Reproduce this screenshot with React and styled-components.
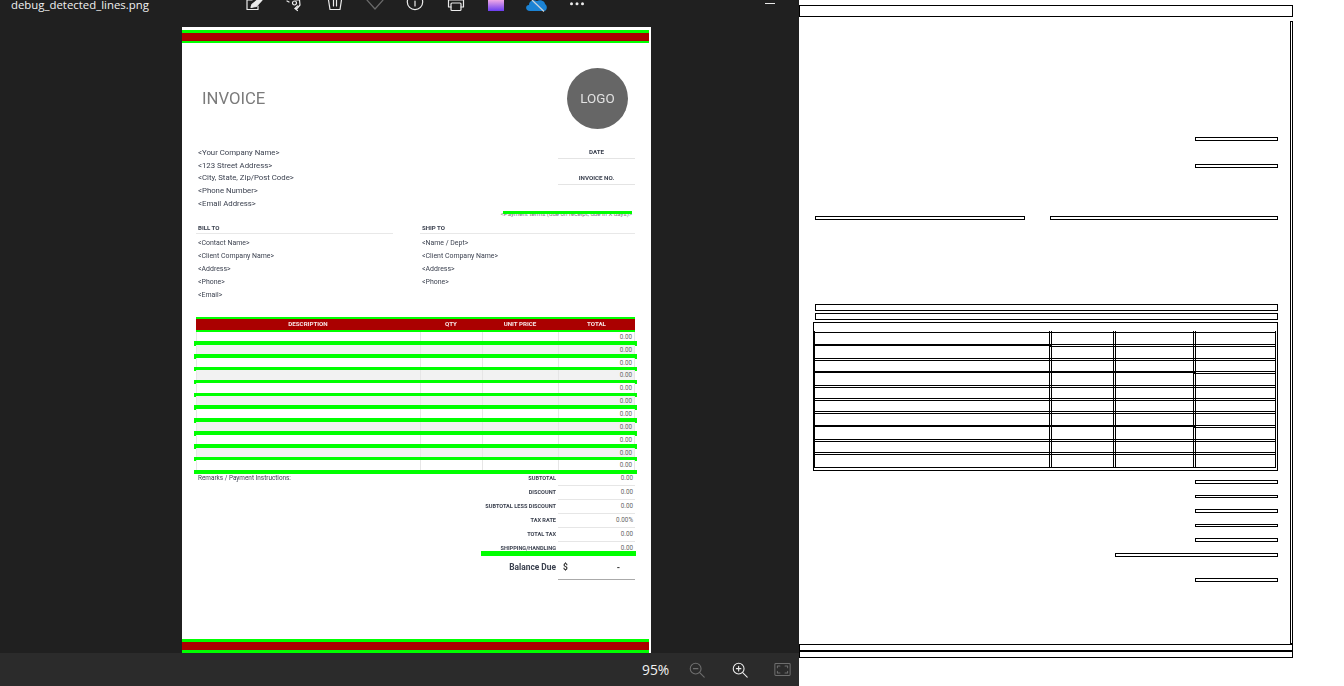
import React from 'react';
import styled, { createGlobalStyle, css } from 'styled-components';

const GlobalStyle = createGlobalStyle`
  html, body {
    margin: 0;
    width: 1344px;
    height: 686px;
    overflow: hidden;
    background: #fff;
  }
  * { box-sizing: border-box; }
`;

const lime = '#00ff00';
const red = '#aa0000';
const soft = css`filter: blur(0.4px);`;

const Page = styled.div`
  display: flex;
  width: 1344px;
  height: 686px;
`;

const Viewer = styled.section`
  display: flex;
  flex-direction: column;
  width: 799px;
  height: 686px;
  background: #202020;
  font-family: "Open Sans", sans-serif;
`;

const Toolbar = styled.header`
  display: flex;
  align-items: flex-start;
  flex: 0 0 27px;
  padding-left: 11px;
  overflow: hidden;
`;

const FileName = styled.span`
  flex: 0 0 223px;
  color: #f0f0f0;
  font-size: 11.4px;
  line-height: 9px;
`;

const ToolIcon = styled.span`
  display: flex;
  justify-content: center;
  flex: 0 0 40.3px;
  color: ${p => (p.$dim ? '#6a6a6a' : '#ececec')};
`;

const Minimize = styled.span`
  width: 10px;
  height: 1px;
  margin: 3px 0 0 auto;
  margin-right: 24px;
  background: #e8e8e8;
`;

const Stage = styled.div`
  flex: 1;
  padding-left: 182px;
`;

const Paper = styled.article`
  display: flex;
  flex-direction: column;
  width: 469px;
  height: 626px;
  padding-top: 3px;
  background: #fff;
  font-family: Roboto, sans-serif;
  color: #3c4250;
`;

const Band = styled.div`
  flex: 0 0 auto;
  height: ${p => p.$h}px;
  margin-right: 2px;
  margin-top: ${p => (p.$bottom ? 'auto' : '0')};
  border-top: 3px solid ${lime};
  border-bottom: ${p => (p.$bottom ? 3 : 2)}px solid ${lime};
  background: ${red};
`;

const Masthead = styled.div`
  display: flex;
  align-items: center;
  justify-content: space-between;
  margin-top: 25px;
  padding: 0 23px 0 20px;
`;

const Title = styled.h1`
  margin: 0;
  color: #7b7b7b;
  font-size: 16.7px;
  font-weight: 400;
  ${soft}
`;

const Logo = styled.div`
  display: flex;
  align-items: center;
  justify-content: center;
  width: 61px;
  height: 61px;
  border-radius: 50%;
  background: #666;
  color: #e2e2e2;
  font-size: 13.4px;
  ${soft}
`;

const InfoRow = styled.div`
  display: flex;
  justify-content: space-between;
  margin-top: 17px;
  padding: 0 16px;
`;

const Lines = styled.div`
  padding-top: 1px;
  font-size: 7.8px;
  line-height: 12.65px;
  ${soft}
`;

const Meta = styled.div`
  width: 77px;
`;

const MetaCell = styled.div`
  height: 13px;
  margin-bottom: 13px;
  border-bottom: 1.5px solid #e4e4e4;
  font-size: 6.2px;
  font-weight: 700;
  line-height: 12px;
  text-align: center;
  ${soft}
`;

const TermsRow = styled.div`
  display: flex;
  justify-content: flex-end;
  margin-top: 1px;
  padding-right: 19px;
`;

const Terms = styled.span`
  position: relative;
  color: #777;
  font-size: 6.15px;
  line-height: 7px;

  &::after {
    content: '';
    position: absolute;
    top: 0;
    left: 2px;
    right: 0;
    height: 2.5px;
    background: ${lime};
  }
`;

const Parties = styled.div`
  display: grid;
  grid-template-columns: 197px 215px;
  column-gap: 27px;
  margin-top: 4px;
  padding-left: 14px;
`;

const PartyTitle = styled.div`
  height: 12px;
  padding-left: 2px;
  border-bottom: 1.5px solid #e8e8e8;
  font-size: 6.1px;
  font-weight: 700;
  line-height: 12px;
  ${soft}
`;

const PartyLines = styled(Lines)`
  height: 65px;
  margin-top: 2.5px;
  padding: 0.5px 0 0 2px;
  font-size: 6.95px;
  line-height: 12.9px;
`;

const Table = styled.div`
  width: 439px;
  margin: 15px 0 0 14px;
`;

const grid = css`
  display: grid;
  grid-template-columns: 224px 62px 76px 77px;
`;

const HeadRow = styled.div`
  ${grid}
  height: 15px;
  border-top: 2px solid ${lime};
  border-bottom: 2px solid ${lime};
  background: ${red};
`;

const HeadCell = styled.span`
  color: #f7e6e6;
  font-size: 6.2px;
  font-weight: 700;
  line-height: 10px;
  text-align: center;
  ${soft}
`;

const Row = styled.div`
  ${grid}
  position: relative;
  height: 12.87px;
  background: ${p => (p.$alt ? '#f2f2f2' : '#fff')};

  &::after {
    content: '';
    position: absolute;
    left: -2px;
    right: -2px;
    bottom: -1px;
    height: 4.5px;
    background: ${lime};
  }
`;

const Cell = styled.span`
  padding-right: 2px;
  border-left: 1px solid #e6e6e6;
  border-right: ${p => (p.$last ? '1px solid #e6e6e6' : '0')};
  color: #666;
  font-size: 6.3px;
  line-height: 10px;
  text-align: right;
`;

const Summary = styled.div`
  display: flex;
  justify-content: space-between;
  margin-top: -2.5px;
  padding: 0 16px;
`;

const Remarks = styled.span`
  font-size: 6.4px;
  line-height: 14px;
  ${soft}
`;

const Totals = styled.div`
  width: 200px;
`;

const TotalRow = styled.div`
  display: grid;
  grid-template-columns: 123px 77px;
  position: relative;
  height: 14px;

  ${p => p.$marked && css`
    &::after {
      content: '';
      position: absolute;
      left: 46px;
      right: -1px;
      bottom: -1px;
      height: 4.5px;
      background: ${lime};
    }
  `}
`;

const TotalLabel = styled.span`
  padding-right: 2px;
  font-size: 5.6px;
  font-weight: 700;
  line-height: 14px;
  text-align: right;
  white-space: nowrap;
  ${soft}
`;

const TotalValue = styled.span`
  padding-right: 2px;
  border-bottom: 1px solid #e6e6e6;
  color: #666;
  font-size: 6.3px;
  line-height: 14px;
  text-align: right;
`;

const BalanceRow = styled.div`
  display: grid;
  grid-template-columns: 123px 77px;
  height: 24.5px;
`;

const BalanceLabel = styled.span`
  padding-right: 2px;
  font-size: 8.4px;
  font-weight: 700;
  line-height: 24px;
  text-align: right;
  ${soft}
`;

const BalanceValue = styled.span`
  display: flex;
  justify-content: space-between;
  padding: 0 15px 0 5px;
  border-bottom: 1.5px solid #aaa;
  color: #333;
  font-size: 8.4px;
  font-weight: 700;
  line-height: 24px;
  ${soft}
`;

const ZoomBar = styled.footer`
  display: flex;
  align-items: center;
  flex: 0 0 33px;
  gap: 22.5px;
  padding-left: 642px;
  background: #2b2b2b;
`;

const ZoomValue = styled.span`
  width: 28px;
  margin-right: -5.5px;
  color: #f2f2f2;
  font-size: 13.8px;
  white-space: nowrap;
`;

const ZoomIcon = styled.span`
  display: flex;
  width: 20px;
  justify-content: center;
  color: ${p => (p.$dim ? '#6e6e6e' : '#ececec')};
`;

/* right half: the picture of detected lines */
const Lineart = styled.section`
  width: 545px;
  height: 686px;
  padding: 5px 51px 0 0;
  background: #fff;
`;

const outline = css`
  border: 1px solid #000;
  background: #fff;
`;

const TopBar = styled.div`
  ${outline}
  height: 12px;
`;

const Middle = styled.div`
  display: flex;
  height: 623px;
  margin-top: 4px;
`;

const Column = styled.div`
  flex: 1;
  padding: 0 12px 0 14px;
`;

const EdgeBar = styled.div`
  ${outline}
  flex: 0 0 3px;
`;

const Bar = styled.div`
  ${outline}
  height: ${p => p.$h || 4}px;
  width: ${p => p.$w || 83}px;
  margin-top: ${p => p.$top}px;
  margin-left: auto;
`;

const SplitRow = styled.div`
  display: flex;
  justify-content: space-between;
  margin: 48px 0 0 2px;
`;

const SplitBar = styled.div`
  ${outline}
  width: ${p => p.$w}px;
  height: 4px;
`;

const WideBar = styled.div`
  ${outline}
  height: 7px;
  margin: ${p => p.$top}px 0 0 2px;
`;

const TableFrame = styled.div`
  ${outline}
  height: 149px;
  margin-top: 2px;
  padding: 9px 1px 0 0;
`;

const LineGrid = styled.div`
  display: grid;
  grid-template-columns: 236px 63px 79px 81px;
  grid-template-rows: 13px 13px 12px 13px 12px 12px 13px 13px 12px 14px;
  gap: 1px;
`;

/* the pseudo lines run each edge on over the 1px gap, so the lines cross */
const LineCell = styled.div`
  ${outline}
  position: relative;
  margin-top: ${p => (p.$thick ? -1 : 0)}px;

  &::before,
  &::after {
    content: '';
    position: absolute;
    pointer-events: none;
  }

  &::before {
    top: -1px;
    bottom: -1px;
    left: -2px;
    right: ${p => (p.$end ? -1 : -2)}px;
    border-top: 1px solid #000;
    border-bottom: 1px solid #000;
  }

  &::after {
    top: -2px;
    bottom: ${p => (p.$floor ? -1 : -2)}px;
    left: -1px;
    right: -1px;
    border-left: 1px solid #000;
    border-right: 1px solid #000;
  }
`;

const BottomBar = styled.div`
  ${outline}
  height: 14px;
  padding-top: 5px;
`;

const BottomRule = styled.div`
  height: 2px;
  background: #000;
`;

const Icon = ({ size = 20, children }) => (
  <svg width={size} height={size} viewBox="0 0 20 20" fill="none" stroke="currentColor" strokeWidth="1.2" strokeLinecap="round" strokeLinejoin="round">
    {children}
  </svg>
);

const toolIcons = [
  <Icon key="edit"><path d="M8 0H3v9.500h11V6" /><path d="M7 7.500l1-3L13.500 0h4.500l-6 6.500z" fill="#ececec" /></Icon>,
  <Icon key="rotate"><path d="M3 1l2 1" /><path d="M12 0h3.500l.5 5-3 3.500h-2" /><circle cx="10.500" cy="3" r="2" /><path d="M13.500 6l-2.500 2.500 2.500 2" /></Icon>,
  <Icon key="trash"><path d="M3.500 0l1.500 9.500h10L16.500 0M8.500 0v6M11.500 0v6" /></Icon>,
  <Icon key="heart"><path d="M2 0l8 9 8-9" /></Icon>,
  <Icon key="info"><circle cx="10" cy="2" r="7.700" /><path d="M10 1v5" /></Icon>,
  <Icon key="print"><path d="M5 7H2.500V0h15v7H15" /><rect x="5" y="3" width="10" height="7.500" rx="1" /></Icon>,
  <svg key="tile" width="20" height="20" viewBox="0 0 20 20">
    <defs>
      <linearGradient id="tile" x1="0" y1="0" x2="0" y2="1">
        <stop offset="0" stopColor="#f0a8e6" />
        <stop offset="1" stopColor="#6a3df0" />
      </linearGradient>
    </defs>
    <rect x="2" y="0" width="16" height="11" fill="url(#tile)" />
  </svg>,
  <svg key="cloud" width="24" height="20" viewBox="0 0 24 20" fill="none">
    <path d="M6 11h14c3 0 4-5 1-7 0-3-5-5-8-3-4-2-8 0-8 4-4 0-4 6 1 6z" fill="#1b83d4" />
    <path d="M8 0l12 11.500" stroke="#c9d2da" strokeWidth="1.300" />
  </svg>,
  <svg key="dots" width="20" height="20" viewBox="0 0 20 20" fill="currentColor">
    <circle cx="4.500" cy="3.700" r="1.500" />
    <circle cx="10" cy="3.700" r="1.500" />
    <circle cx="15.500" cy="3.700" r="1.500" />
  </svg>,
];

const company = ['<Your Company Name>', '<123 Street Address>', '<City, State, Zip/Post Code>', '<Phone Number>', '<Email Address>'];
const billTo = ['<Contact Name>', '<Client Company Name>', '<Address>', '<Phone>', '<Email>'];
const shipTo = ['<Name / Dept>', '<Client Company Name>', '<Address>', '<Phone>'];
const totals = [
  ['SUBTOTAL', '0.00'],
  ['DISCOUNT', '0.00'],
  ['SUBTOTAL LESS DISCOUNT', '0.00'],
  ['TAX RATE', '0.00%'],
  ['TOTAL TAX', '0.00'],
  ['SHIPPING/HANDLING', '0.00'],
];
const thickCells = { 1: 1, 3: 3, 7: 3 };

export default function App() {
  return (
    <Page>
      <GlobalStyle />
      <Viewer>
        <Toolbar>
          <FileName>debug_detected_lines.png</FileName>
          {toolIcons.map((icon, i) => (
            <ToolIcon key={i} $dim={i === 3}>{icon}</ToolIcon>
          ))}
          <Minimize />
        </Toolbar>
        <Stage>
          <Paper>
            <Band $h={13} />
            <Masthead>
              <Title>INVOICE</Title>
              <Logo>LOGO</Logo>
            </Masthead>
            <InfoRow>
              <Lines>{company.map(t => <div key={t}>{t}</div>)}</Lines>
              <Meta>
                <MetaCell>DATE</MetaCell>
                <MetaCell>INVOICE NO.</MetaCell>
              </Meta>
            </InfoRow>
            <TermsRow>
              <Terms>{'<Payment terms (due on receipt, due in X days)>'}</Terms>
            </TermsRow>
            <Parties>
              <div>
                <PartyTitle>BILL TO</PartyTitle>
                <PartyLines>{billTo.map(t => <div key={t}>{t}</div>)}</PartyLines>
              </div>
              <div>
                <PartyTitle>SHIP TO</PartyTitle>
                <PartyLines>{shipTo.map(t => <div key={t}>{t}</div>)}</PartyLines>
              </div>
            </Parties>
            <Table>
              <HeadRow>
                {['DESCRIPTION', 'QTY', 'UNIT PRICE', 'TOTAL'].map(t => <HeadCell key={t}>{t}</HeadCell>)}
              </HeadRow>
              {Array.from({ length: 11 }, (_, i) => (
                <Row key={i} $alt={i % 2 === 1}>
                  <Cell />
                  <Cell />
                  <Cell />
                  <Cell $last>0.00</Cell>
                </Row>
              ))}
            </Table>
            <Summary>
              <Remarks>Remarks / Payment Instructions:</Remarks>
              <Totals>
                {totals.map(([label, value], i) => (
                  <TotalRow key={label} $marked={i === totals.length - 1}>
                    <TotalLabel>{label}</TotalLabel>
                    <TotalValue>{value}</TotalValue>
                  </TotalRow>
                ))}
                <BalanceRow>
                  <BalanceLabel>Balance Due</BalanceLabel>
                  <BalanceValue><span>$</span><span>-</span></BalanceValue>
                </BalanceRow>
              </Totals>
            </Summary>
            <Band $h={14} $bottom />
          </Paper>
        </Stage>
        <ZoomBar>
          <ZoomValue>95%</ZoomValue>
          <ZoomIcon $dim><Icon size={18}><circle cx="8.500" cy="8.500" r="6" /><path d="M6 8.500h5M13 13l5 5" /></Icon></ZoomIcon>
          <ZoomIcon><Icon size={18}><circle cx="8.500" cy="8.500" r="6" /><path d="M6 8.500h5M8.500 6v5M13 13l5 5" /></Icon></ZoomIcon>
          <ZoomIcon $dim><Icon size={17}><path d="M4 8V6h3M13 6h3v2M16 12v2h-3M7 14H4v-2" /><rect x="1" y="3" width="18" height="14" rx="1" /></Icon></ZoomIcon>
        </ZoomBar>
      </Viewer>
      <Lineart>
        <TopBar />
        <Middle>
          <Column>
            <Bar $top={116} />
            <Bar $top={23} />
            <SplitRow>
              <SplitBar $w={210} />
              <SplitBar $w={228} />
            </SplitRow>
            <WideBar $top={84} />
            <WideBar $top={2} />
            <TableFrame>
              <LineGrid>
                {Array.from({ length: 40 }, (_, i) => {
                  const row = Math.floor(i / 4);
                  const col = i % 4;
                  return <LineCell key={i} $thick={col < (thickCells[row] || 0)} $end={col === 3} $floor={row === 9} />;
                })}
              </LineGrid>
            </TableFrame>
            <Bar $top={9} />
            <Bar $top={11} $h={3} />
            <Bar $top={11} />
            <Bar $top={11} $h={3} />
            <Bar $top={11} />
            <Bar $top={11} $w={163} />
            <Bar $top={21} />
          </Column>
          <EdgeBar />
        </Middle>
        <BottomBar>
          <BottomRule />
        </BottomBar>
      </Lineart>
    </Page>
  );
}
